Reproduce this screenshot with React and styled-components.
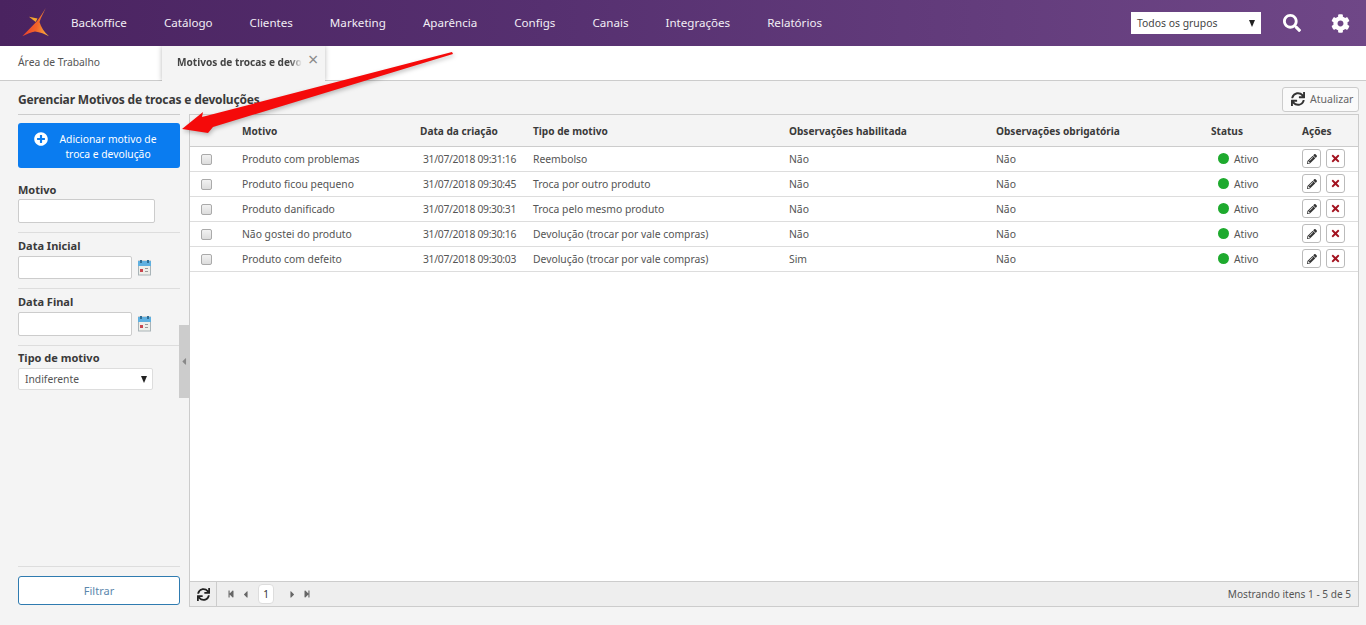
import React from 'react';
import styled, { createGlobalStyle } from 'styled-components';
import {
  FaSearch, FaCog, FaSync, FaPlusCircle, FaPencilAlt, FaTimes,
  FaStepBackward, FaStepForward, FaCaretLeft, FaCaretRight,
} from 'react-icons/fa';

const menu = ['Backoffice', 'Catálogo', 'Clientes', 'Marketing', 'Aparência', 'Configs', 'Canais', 'Integrações', 'Relatórios'];

const rows = [
  ['Produto com problemas', '31/07/2018 09:31:16', 'Reembolso', 'Não', 'Não'],
  ['Produto ficou pequeno', '31/07/2018 09:30:45', 'Troca por outro produto', 'Não', 'Não'],
  ['Produto danificado', '31/07/2018 09:30:31', 'Troca pelo mesmo produto', 'Não', 'Não'],
  ['Não gostei do produto', '31/07/2018 09:30:16', 'Devolução (trocar por vale compras)', 'Não', 'Não'],
  ['Produto com defeito', '31/07/2018 09:30:03', 'Devolução (trocar por vale compras)', 'Sim', 'Não'],
];

function Logo() {
  return (
    <svg width="36" height="36" viewBox="0 0 36 36">
      <defs>
        <linearGradient id="logoFill" x1="0" y1="0.5" x2="1" y2="0.7">
          <stop offset="0" stopColor="#e63a2e" />
          <stop offset="0.55" stopColor="#f2642a" />
          <stop offset="1" stopColor="#f8b03c" />
        </linearGradient>
      </defs>
      <path d="M27.700 3 C25 8 22 12 19.500 15.500 L17.700 17.500 L4.300 31.300 C9 29 13 27 17 26.500 C22 27 27 29 31 31.300 C26 27 23 22 21.500 17 C23 12 26 7 27.700 3 Z" fill="url(#logoFill)" />
      <path d="M11 11.700 L19.500 13.500 L17.700 17 Z" fill="#f6a62e" />
    </svg>
  );
}

function CalendarIcon() {
  return (
    <svg width="13" height="16" viewBox="0 0 13 16">
      <rect x="0.500" y="1" width="12" height="14" fill="#efefea" stroke="#a9b4b8" />
      <rect x="0" y="1" width="13" height="5" fill="#5fb0e0" />
      <rect x="2" y="0" width="2" height="3" fill="#2f6d94" />
      <rect x="9" y="0" width="2" height="3" fill="#2f6d94" />
      <rect x="2" y="9" width="3" height="3" fill="#c9474f" />
      <rect x="7" y="8" width="3" height="1" fill="#9a9a9a" />
      <rect x="7" y="11" width="3" height="1" fill="#9a9a9a" />
    </svg>
  );
}

function App() {
  return (
    <Page>
      <GlobalStyle />
      <TopBar>
        <LogoSlot><Logo /></LogoSlot>
        <Menu>
          {menu.map(item => <MenuItem key={item}>{item}</MenuItem>)}
        </Menu>
        <GroupSelect>
          Todos os grupos
          <Caret />
        </GroupSelect>
        <TopIcon><FaSearch size={18} /></TopIcon>
        <TopIcon><FaCog size={19} /></TopIcon>
      </TopBar>

      <TabBar>
        <HomeTab>Área de Trabalho</HomeTab>
        <ActiveTab>
          <TabLabel>Motivos de trocas e devo</TabLabel>
          <TabClose>×</TabClose>
        </ActiveTab>
      </TabBar>

      <TitleRow>
        <Title>Gerenciar Motivos de trocas e devoluções</Title>
        <RefreshButton><FaSync size={14} color="#333" />Atualizar</RefreshButton>
      </TitleRow>

      <Workspace>
        <Sidebar>
          <AddButton>
            <FaPlusCircle size={14} />
            <AddLabel>Adicionar motivo de troca e devolução</AddLabel>
          </AddButton>
          <FilterGroup $top={1}>
            <FilterLabel>Motivo</FilterLabel>
            <TextInput $width={137} $height={24} />
          </FilterGroup>
          <FilterGroup $top={5}>
            <FilterLabel>Data Inicial</FilterLabel>
            <DateRow>
              <TextInput $width={114} $height={23} />
              <CalendarIcon />
            </DateRow>
          </FilterGroup>
          <FilterGroup $top={5}>
            <FilterLabel>Data Final</FilterLabel>
            <DateRow>
              <TextInput $width={114} $height={24} />
              <CalendarIcon />
            </DateRow>
          </FilterGroup>
          <FilterGroup $top={4} $plain>
            <FilterLabel>Tipo de motivo</FilterLabel>
            <TypeSelect>
              Indiferente
              <Caret />
            </TypeSelect>
          </FilterGroup>
          <SidebarFooter>
            <FilterButton>Filtrar</FilterButton>
          </SidebarFooter>
        </Sidebar>

        <Grid>
          <CollapseHandle><FaCaretLeft size={11} /></CollapseHandle>
          <GridBody>
            <Table>
              <colgroup>
                <col width="42" />
                <col width="178" />
                <col width="113" />
                <col width="256" />
                <col width="207" />
                <col width="215" />
                <col width="91" />
                <col width="66" />
              </colgroup>
              <thead>
                <tr>
                  <HeadCell />
                  <HeadCell>Motivo</HeadCell>
                  <HeadCell>Data da criação</HeadCell>
                  <HeadCell>Tipo de motivo</HeadCell>
                  <HeadCell>Observações habilitada</HeadCell>
                  <HeadCell>Observações obrigatória</HeadCell>
                  <HeadCell>Status</HeadCell>
                  <HeadCell>Ações</HeadCell>
                </tr>
              </thead>
              <tbody>
                {rows.map(row => (
                  <tr key={row[0]}>
                    <Cell><CheckBox /></Cell>
                    <Cell>{row[0]}</Cell>
                    <DateCell>{row[1]}</DateCell>
                    <Cell>{row[2]}</Cell>
                    <Cell>{row[3]}</Cell>
                    <Cell>{row[4]}</Cell>
                    <Cell>
                      <StatusWrap><StatusDot />Ativo</StatusWrap>
                    </Cell>
                    <Cell>
                      <Actions>
                        <ActionButton><FaPencilAlt size={10} color="#333" /></ActionButton>
                        <ActionButton><FaTimes size={11} color="#a3121f" /></ActionButton>
                      </Actions>
                    </Cell>
                  </tr>
                ))}
              </tbody>
            </Table>
          </GridBody>
          <Pager>
            <PagerRefresh><FaSync size={13} color="#222" /></PagerRefresh>
            <PagerNav>
              <FaStepBackward size={8} />
              <FaCaretLeft size={11} />
              <PageNumber>1</PageNumber>
              <FaCaretRight size={11} />
              <FaStepForward size={8} />
            </PagerNav>
            <PagerInfo>Mostrando itens 1 - 5 de 5</PagerInfo>
          </Pager>
        </Grid>
      </Workspace>

      <Arrow width="470" height="140" viewBox="0 0 470 140">
        <polygon points="452,52 202,117 203,112 182,129 208,133 213,127 453,54" fill="#f50a0a" />
      </Arrow>
    </Page>
  );
}

const GlobalStyle = createGlobalStyle`
  html, body {
    margin: 0;
    padding: 0;
    background: #f4f4f4;
  }

  * {
    box-sizing: border-box;
  }
`;

const Page = styled.div`
  position: relative;
  width: 1366px;
  height: 625px;
  overflow: hidden;
  background: #f4f4f4;
  color: #555;
  font-family: "Noto Sans", "Open Sans", sans-serif;
  font-size: 11px;
`;

const TopBar = styled.header`
  display: flex;
  align-items: center;
  height: 46px;
  padding-right: 16px;
  background: linear-gradient(90deg, #4a2360 0%, #563070 40%, #6f4787 100%);
`;

const LogoSlot = styled.div`
  display: flex;
  width: 71px;
  padding-left: 18px;
`;

const Menu = styled.nav`
  display: flex;
  flex: 1;
  gap: 37px;
  padding-bottom: 2px;
`;

const MenuItem = styled.a`
  color: #f2eef5;
  font-size: 11.600px;
`;

const GroupSelect = styled.div`
  display: flex;
  align-items: center;
  justify-content: space-between;
  width: 130px;
  height: 22px;
  margin-right: 22px;
  padding: 0 6px;
  background: #fff;
  color: #444;
  font-size: 10.400px;
`;

const Caret = styled.span`
  width: 0;
  height: 0;
  border-top: 7px solid #222;
  border-right: 3.500px solid transparent;
  border-left: 3.500px solid transparent;
`;

const TopIcon = styled.span`
  display: flex;
  color: #fff;

  & + & {
    margin-left: 30px;
  }
`;

const TabBar = styled.div`
  display: flex;
  height: 35px;
  background: #fff;
  border-bottom: 1px solid #ccc;
`;

const HomeTab = styled.div`
  width: 162px;
  padding: 9px 0 0 18px;
  font-size: 10.300px;
  color: #555;
`;

const ActiveTab = styled.div`
  display: flex;
  width: 163px;
  height: 35px;
  padding: 9px 0 0 15px;
  background: #f4f4f4;
  box-shadow: 0 0 5px rgba(0, 0, 0, 0.28);
  clip-path: inset(0 -6px 0 -6px);
`;

const TabLabel = styled.span`
  width: 125px;
  overflow: hidden;
  white-space: nowrap;
  font-size: 10.100px;
  font-weight: 700;
  color: #444;
  mask-image: linear-gradient(90deg, #000 90%, transparent 100%);
`;

const TabClose = styled.span`
  margin: -6px 0 0 6px;
  color: #8b8b8b;
  font-size: 18px;
  line-height: 20px;
`;

const TitleRow = styled.div`
  display: flex;
  align-items: center;
  justify-content: space-between;
  height: 33px;
  padding: 3px 7px 0 18px;
`;

const Title = styled.h1`
  margin: 0;
  color: #3a3a3a;
  font-size: 12px;
  font-weight: 700;
  letter-spacing: -0.160px;
`;

const RefreshButton = styled.button`
  display: flex;
  align-items: center;
  gap: 5px;
  width: 77px;
  height: 25px;
  padding: 0 0 0 8px;
  border: 1px solid #ccc;
  border-radius: 3px;
  background: #fafafa;
  color: #666;
  font: inherit;
  font-size: 10.500px;
`;

const Workspace = styled.div`
  display: flex;
  height: 493px;
  padding: 0 7px 0 18px;
`;

const Sidebar = styled.aside`
  display: flex;
  flex-direction: column;
  width: 162px;
  margin-right: 9px;
  padding-top: 8px;
  border-top: 1px solid #ccc;
`;

const AddButton = styled.button`
  display: flex;
  align-items: flex-start;
  flex-shrink: 0;
  width: 162px;
  height: 45px;
  margin-bottom: 13px;
  padding: 9px 19px 0 16px;
  border: 0;
  border-radius: 3px;
  background: #0a7cf0;
  color: #fff;
  font: inherit;
`;

const AddLabel = styled.span`
  flex: 1;
  padding-left: 7px;
  font-size: 10.300px;
  line-height: 15px;
  text-align: center;
`;

const FilterGroup = styled.div`
  flex-shrink: 0;
  padding-top: ${props => props.$top}px;
  padding-bottom: ${props => (props.$plain ? '0' : '9px')};
  border-bottom: ${props => (props.$plain ? '0' : '1px solid #ddd')};
`;

const FilterLabel = styled.label`
  display: block;
  height: 15px;
  margin-bottom: 2px;
  color: #3a3a3a;
  font-size: 11px;
  font-weight: 700;
  line-height: 15px;
`;

const TextInput = styled.input`
  display: block;
  width: ${props => props.$width}px;
  height: ${props => props.$height}px;
  border: 1px solid #ccc;
  border-radius: 2px;
  background: #fff;
`;

const DateRow = styled.div`
  display: flex;
  align-items: center;
  gap: 6px;
  margin-top: 3px;
`;

const TypeSelect = styled.div`
  display: flex;
  align-items: center;
  justify-content: space-between;
  width: 135px;
  height: 22px;
  margin-top: 3px;
  padding: 0 5px 0 6px;
  border: 1px solid #ddd;
  border-radius: 2px;
  background: #fff;
  font-size: 10.300px;
`;

const SidebarFooter = styled.div`
  margin-top: auto;
  padding: 9px 0 2px;
  border-top: 1px solid #ddd;
`;

const FilterButton = styled.button`
  display: block;
  width: 162px;
  height: 29px;
  border: 1px solid #2f7bb0;
  border-radius: 3px;
  background: #fff;
  color: #5c87ad;
  font: inherit;
  font-size: 11px;
`;

const Grid = styled.section`
  position: relative;
  display: flex;
  flex: 1;
  flex-direction: column;
  border: 1px solid #ccc;
  background: #fff;
`;

const CollapseHandle = styled.div`
  position: absolute;
  top: 210px;
  left: -11px;
  display: flex;
  align-items: center;
  justify-content: center;
  width: 10px;
  height: 73px;
  background: #ccc;
  color: #888;
`;

const GridBody = styled.div`
  flex: 1;
`;

const Table = styled.table`
  width: 100%;
  table-layout: fixed;
  border-collapse: collapse;
`;

const HeadCell = styled.th`
  height: 31px;
  padding: 2px 0 0 10px;
  border-bottom: 1px solid #ccc;
  background: #f4f4f4;
  color: #3a3a3a;
  font-size: 10.100px;
  font-weight: 700;
  text-align: left;
  white-space: nowrap;
`;

const Cell = styled.td`
  height: 25px;
  padding: 0 0 0 10px;
  border-bottom: 1px solid #ddd;
  color: #555;
  font-size: 10.350px;
  white-space: nowrap;
`;

const DateCell = styled(Cell)`
  padding-left: 13px;
  letter-spacing: -0.300px;
`;

const CheckBox = styled.span`
  display: block;
  width: 11px;
  height: 11px;
  margin: 1px 0 0 1px;
  border: 1px solid #aaa;
  border-radius: 2px;
  background: linear-gradient(#f2f2f2, #dcdcdc);
`;

const StatusWrap = styled.div`
  display: flex;
  align-items: center;
  gap: 5px;
  padding-left: 7px;
`;

const StatusDot = styled.span`
  width: 11px;
  height: 11px;
  border-radius: 50%;
  background: #1eaa2e;
`;

const Actions = styled.div`
  display: flex;
  gap: 5px;
`;

const ActionButton = styled.button`
  display: flex;
  align-items: center;
  justify-content: center;
  width: 19px;
  height: 19px;
  padding: 0;
  border: 1px solid #bbb;
  border-radius: 3px;
  background: #fff;
`;

const Pager = styled.footer`
  display: flex;
  align-items: center;
  height: 25px;
  border-top: 1px solid #ccc;
  background: #eee;
`;

const PagerRefresh = styled.div`
  display: flex;
  align-items: center;
  justify-content: center;
  width: 27px;
  height: 100%;
  border-right: 1px solid #ccc;
`;

const PagerNav = styled.div`
  display: flex;
  flex: 1;
  align-items: center;
  gap: 5px;
  padding-left: 10px;
  color: #666;
`;

const PageNumber = styled.span`
  display: flex;
  align-items: center;
  justify-content: center;
  width: 16px;
  height: 20px;
  margin: 0 8px 0 2px;
  border: 1px solid #ddd;
  border-radius: 4px;
  background: #fff;
  color: #333;
  font-size: 10px;
`;

const PagerInfo = styled.span`
  padding-right: 7px;
  color: #555;
  font-size: 10.100px;
`;

const Arrow = styled.svg`
  position: absolute;
  top: 0;
  left: 0;
  filter: drop-shadow(1px 2px 2px rgba(0, 0, 0, 0.25));
`;

export default App;
